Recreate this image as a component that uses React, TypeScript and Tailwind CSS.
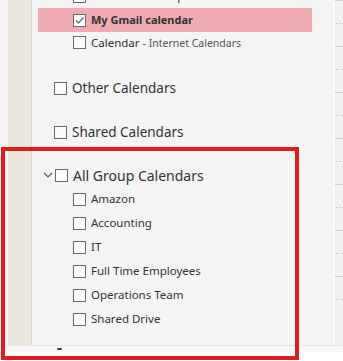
import React from 'react';

const font = { fontFamily: '"Segoe UI", "Noto Sans", "Open Sans", sans-serif' };

function Box({ checked = false }: { checked?: boolean }) {
  return (
    <span className="w-[13px] h-[13px] border border-[#6b6b6b] bg-[#fbfbfb] flex items-center justify-center shrink-0">
      {checked && (
        <svg width="11" height="11" viewBox="0 0 11 11">
          <path d="M2 5.5 L4.5 8 L9.5 2.5" fill="none" stroke="#6a6a6a" strokeWidth="1.2" />
        </svg>
      )}
    </span>
  );
}

const groups = ['Amazon', 'Accounting', 'IT', 'Full Time Employees', 'Operations Team', 'Shared Drive'];

export default function App() {
  return (
    <div className="relative w-[343px] h-[361px] bg-white overflow-hidden text-[#333]" style={font}>
      <div className="flex h-[345px]">
        <div className="w-[8px] bg-[#f4f3f2]" />
        <div className="w-[24px] bg-[#ebe7e0] border-r border-[#d9d7d3]" />
        <div className="flex-1 bg-[#f4f4f4] flex flex-col">
          <div className="h-[24px] mt-[-16px] flex items-center pl-[41px] gap-[6px]">
            <Box />
            <span className="text-[11.5px]">Calendar - Group</span>
          </div>
          <div className="h-[24px] ml-[6px] w-[274px] bg-[#eeabb1] flex items-center pl-[35px] gap-[5px]">
            <Box checked />
            <span className="text-[11px] font-bold text-[#333]">My Gmail calendar</span>
          </div>
          <div className="h-[21px] flex items-center pl-[41px] gap-[5px]">
            <Box />
            <span className="text-[11.5px]">
              Calendar <span className="text-[10.5px] text-[#555]">- Internet Calendars</span>
            </span>
          </div>
          <div className="h-[44px] mt-[13px] flex items-center pl-[22px] gap-[5px]">
            <Box />
            <span className="text-[13.5px]">Other Calendars</span>
          </div>
          <div className="h-[44px] flex items-center pl-[22px] gap-[5px]">
            <Box />
            <span className="text-[13.5px]">Shared Calendars</span>
          </div>
          <div className="h-[20px] mt-[11px] flex items-center pl-[10px]">
            <svg width="12" height="10" viewBox="0 0 12 10" className="mr-[1px]">
              <path d="M2 3 L6 7 L10 3" fill="none" stroke="#555" strokeWidth="1.1" />
            </svg>
            <Box />
            <span className="text-[14px] ml-[5px]">All Group Calendars</span>
          </div>
          <div className="pt-[2px] flex flex-col">
            {groups.map(g => (
              <div key={g} className="h-[24px] flex items-center pl-[41px] gap-[5px]">
                <Box />
                <span className="text-[11.5px]">{g}</span>
              </div>
            ))}
          </div>
        </div>
        <div className="w-[2px] bg-[#fafafa]" />
        <div className="w-[8px] bg-[#f1f0ee] flex flex-col">
          {[0, 1, 2, 3, 4, 5, 6].map(i => (
            <div key={i} className="h-[46px] border-t border-[#cfcfcf] flex items-center gap-[2px] pl-[1px]">
              <span className="w-[1px] h-[1px] bg-[#bbb]" />
              <span className="w-[1px] h-[1px] bg-[#bbb]" />
              <span className="w-[1px] h-[1px] bg-[#bbb]" />
            </div>
          ))}
        </div>
      </div>
      <div className="h-[7px] bg-[#f7f7f7] border-t border-[#e6e6e6] relative">
        <span className="absolute left-[57px] top-[2px] w-[5px] h-[2px] bg-[#444] rounded-full" />
      </div>
      <div className="absolute left-[1px] top-[147px] w-[298px] h-[213px] border-[4px] border-[#e21b1b]" />
    </div>
  );
}
